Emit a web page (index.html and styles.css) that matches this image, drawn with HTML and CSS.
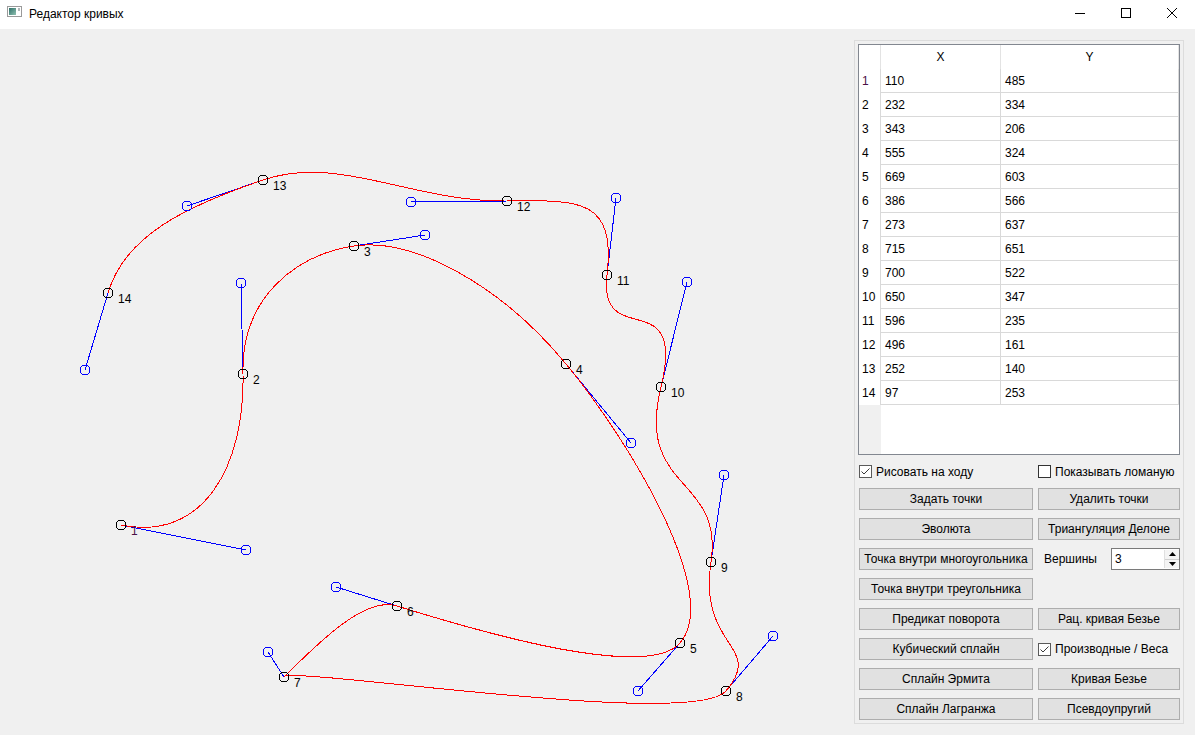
FILE: index.html
```html
<!DOCTYPE html>
<html lang="ru">
<head>
<meta charset="utf-8">
<title>Редактор кривых</title>
<link rel="stylesheet" href="styles.css">
</head>
<body>
<div class="window">
  <header class="titlebar">
    <svg class="app-icon" width="16" height="12" viewBox="0 0 16 12">
      <defs>
        <linearGradient id="ig" x1="0" y1="0" x2="1" y2="1">
          <stop offset="0" stop-color="#2d6f68"/>
          <stop offset="1" stop-color="#8fc0b0"/>
        </linearGradient>
      </defs>
      <rect x="0.5" y="0.5" width="14" height="10" fill="#fff" stroke="#9a9a9a"/>
      <rect x="2" y="2" width="7" height="7" fill="url(#ig)"/>
      <rect x="11" y="2" width="2" height="3" fill="#b0b8b8"/>
    </svg>
    <span class="title">Редактор кривых</span>
    <div class="controls">
      <span class="ctl"><svg width="10" height="10" viewBox="0 0 10 10"><line x1="0" y1="5.5" x2="10" y2="5.5" stroke="#000" stroke-width="1"/></svg></span>
      <span class="ctl"><svg width="10" height="10" viewBox="0 0 10 10"><rect x="0.5" y="0.5" width="9" height="9" fill="none" stroke="#000" stroke-width="1"/></svg></span>
      <span class="ctl"><svg width="10" height="10" viewBox="0 0 10 10"><path d="M0 0 L10 10 M10 0 L0 10" stroke="#000" stroke-width="1"/></svg></span>
    </div>
  </header>

  <main class="client">
    <div class="canvas">
      <svg class="plot" width="854" height="706" viewBox="0 29 854 706">
        <g class="handles-lines" stroke="#0000ff" stroke-width="1">
          <line x1="121" y1="525" x2="246" y2="550"/>
          <line x1="243" y1="374" x2="241" y2="283"/>
          <line x1="354" y1="246" x2="425" y2="235"/>
          <line x1="566" y1="364" x2="631" y2="443"/>
          <line x1="680" y1="643" x2="638" y2="691"/>
          <line x1="397" y1="606" x2="336" y2="587"/>
          <line x1="284" y1="677" x2="268" y2="652"/>
          <line x1="726" y1="691" x2="773" y2="636"/>
          <line x1="711" y1="562" x2="724" y2="475"/>
          <line x1="661" y1="387" x2="687" y2="282"/>
          <line x1="607" y1="275" x2="616" y2="198"/>
          <line x1="507" y1="201" x2="411" y2="202"/>
          <line x1="263" y1="180" x2="187" y2="206"/>
          <line x1="108" y1="293" x2="85" y2="370"/>
        </g>
        <path class="curve" fill="none" stroke="#ff0000" stroke-width="1"
          d="M121,525
             C204,542 245,465 243,374
             C241,298 295,255 354,246
             C413,237 501,285 566,364
             C631,443 722,595 680,643
             C645,683 458,625 397,606
             C366.5,596.5 324,637 285,676
             C320,670 695,728 726,691
             C765,645 698,649 711,562
             C724,475 635,492 661,387
             C687,282 598,352 607,275
             C616,198 579,200 507,201
             C411,202 339,154 263,180
             C187,206 125,235 108,293"/>
        <g class="handles" fill="none" stroke="#0000ff" stroke-width="1">
          <circle cx="246" cy="550" r="5"/>
          <circle cx="241" cy="283" r="5"/>
          <circle cx="425" cy="235" r="5"/>
          <circle cx="631" cy="443" r="5"/>
          <circle cx="638" cy="691" r="5"/>
          <circle cx="336" cy="587" r="5"/>
          <circle cx="268" cy="652" r="5"/>
          <circle cx="773" cy="636" r="5"/>
          <circle cx="724" cy="475" r="5"/>
          <circle cx="687" cy="282" r="5"/>
          <circle cx="616" cy="198" r="5"/>
          <circle cx="411" cy="202" r="5"/>
          <circle cx="187" cy="206" r="5"/>
          <circle cx="85" cy="370" r="5"/>
        </g>
        <g class="points" fill="none" stroke="#000" stroke-width="1">
          <circle cx="121" cy="525" r="5"/>
          <circle cx="243" cy="374" r="5"/>
          <circle cx="354" cy="246" r="5"/>
          <circle cx="566" cy="364" r="5"/>
          <circle cx="680" cy="643" r="5"/>
          <circle cx="397" cy="606" r="5"/>
          <circle cx="284" cy="677" r="5"/>
          <circle cx="726" cy="691" r="5"/>
          <circle cx="711" cy="562" r="5"/>
          <circle cx="661" cy="387" r="5"/>
          <circle cx="607" cy="275" r="5"/>
          <circle cx="507" cy="201" r="5"/>
          <circle cx="263" cy="180" r="5"/>
          <circle cx="108" cy="293" r="5"/>
        </g>
        <g class="labels">
          <text x="131" y="535" class="lbl-first">1</text>
          <text x="253" y="384">2</text>
          <text x="364" y="256">3</text>
          <text x="576" y="374">4</text>
          <text x="690" y="653">5</text>
          <text x="407" y="616">6</text>
          <text x="294" y="687">7</text>
          <text x="736" y="701">8</text>
          <text x="721" y="572">9</text>
          <text x="671" y="397">10</text>
          <text x="617" y="285">11</text>
          <text x="517" y="211">12</text>
          <text x="273" y="190">13</text>
          <text x="118" y="303">14</text>
        </g>
      </svg>
    </div>

    <aside class="panel">
      <div class="group">
        <div class="table">
          <div class="thead">
            <div class="hcorner"></div>
            <div class="th">X</div>
            <div class="th">Y</div>
          </div>
          <div class="tr"><div class="rn rn-current">1</div><div class="td">110</div><div class="td">485</div></div>
          <div class="tr"><div class="rn">2</div><div class="td">232</div><div class="td">334</div></div>
          <div class="tr"><div class="rn">3</div><div class="td">343</div><div class="td">206</div></div>
          <div class="tr"><div class="rn">4</div><div class="td">555</div><div class="td">324</div></div>
          <div class="tr"><div class="rn">5</div><div class="td">669</div><div class="td">603</div></div>
          <div class="tr"><div class="rn">6</div><div class="td">386</div><div class="td">566</div></div>
          <div class="tr"><div class="rn">7</div><div class="td">273</div><div class="td">637</div></div>
          <div class="tr"><div class="rn">8</div><div class="td">715</div><div class="td">651</div></div>
          <div class="tr"><div class="rn">9</div><div class="td">700</div><div class="td">522</div></div>
          <div class="tr"><div class="rn">10</div><div class="td">650</div><div class="td">347</div></div>
          <div class="tr"><div class="rn">11</div><div class="td">596</div><div class="td">235</div></div>
          <div class="tr"><div class="rn">12</div><div class="td">496</div><div class="td">161</div></div>
          <div class="tr"><div class="rn">13</div><div class="td">252</div><div class="td">140</div></div>
          <div class="tr"><div class="rn">14</div><div class="td">97</div><div class="td">253</div></div>
          <div class="tfill"><div class="tfill-rn"></div></div>
        </div>

        <div class="checks">
          <label class="check">
            <span class="box checked"><svg width="11" height="11" viewBox="0 0 11 11"><path d="M1.5 5.5 L4 8 L9.5 2.5" fill="none" stroke="#3a3a3a" stroke-width="1"/></svg></span>
            <span>Рисовать на ходу</span>
          </label>
          <label class="check">
            <span class="box"></span>
            <span>Показывать ломаную</span>
          </label>
        </div>

        <div class="buttons">
          <button class="btn">Задать точки</button>
          <button class="btn">Удалить точки</button>

          <button class="btn">Эволюта</button>
          <button class="btn">Триангуляция Делоне</button>

          <button class="btn">Точка внутри многоугольника</button>
          <div class="spin-cell">
            <span class="spin-label">Вершины</span>
            <div class="spinbox">
              <span class="spin-value">3</span>
              <div class="spin-btns">
                <span class="spin-up"><svg width="7" height="4" viewBox="0 0 7 4"><path d="M0 4 L3.5 0 L7 4 Z" fill="#000"/></svg></span>
                <span class="spin-down"><svg width="7" height="4" viewBox="0 0 7 4"><path d="M0 0 L3.5 4 L7 0 Z" fill="#000"/></svg></span>
              </div>
            </div>
          </div>

          <button class="btn">Точка внутри треугольника</button>
          <div class="empty"></div>

          <button class="btn">Предикат поворота</button>
          <button class="btn">Рац. кривая Безье</button>

          <button class="btn">Кубический сплайн</button>
          <label class="check">
            <span class="box checked"><svg width="11" height="11" viewBox="0 0 11 11"><path d="M1.5 5.5 L4 8 L9.5 2.5" fill="none" stroke="#3a3a3a" stroke-width="1"/></svg></span>
            <span>Производные / Веса</span>
          </label>

          <button class="btn">Сплайн Эрмита</button>
          <button class="btn">Кривая Безье</button>

          <button class="btn">Сплайн Лагранжа</button>
          <button class="btn">Псевдоупругий</button>
        </div>
      </div>
    </aside>
  </main>
</div>
</body>
</html>
```

FILE: styles.css
```css
* {
  box-sizing: border-box;
}

html,
body {
  margin: 0;
  padding: 0;
}

body {
  width: 1195px;
  height: 735px;
  overflow: hidden;
  background: #f0f0f0;
  font-family: "Liberation Sans", "Noto Sans", Arial, sans-serif;
  font-size: 12px;
  color: #000;
}

.window {
  display: flex;
  flex-direction: column;
  height: 735px;
}

/* ---------- title bar ---------- */
.titlebar {
  flex: none;
  height: 29px;
  background: #fff;
  display: flex;
  align-items: flex-start;
}

.app-icon {
  display: block;
  margin: 6px 0 0 7px;
}

.title {
  margin: 7px 0 0 6px;
  font-size: 12px;
  line-height: 15px;
}

.controls {
  margin-left: auto;
  display: flex;
}

.ctl {
  width: 46px;
  height: 29px;
  display: flex;
  justify-content: center;
  padding-top: 8px;
}

.ctl svg {
  display: block;
  shape-rendering: crispEdges;
}

/* ---------- client ---------- */
.client {
  flex: 1;
  display: flex;
  min-height: 0;
}

.canvas {
  flex: none;
  width: 854px;
  height: 706px;
}

.plot {
  display: block;
  shape-rendering: crispEdges;
}

.labels text {
  font-family: "Liberation Sans", "Noto Sans", Arial, sans-serif;
  font-size: 12px;
  fill: #000;
}

.labels .lbl-first {
  fill: #4a1046;
}

/* ---------- right panel ---------- */
.panel {
  flex: 1;
  display: flex;
  padding: 11px 11px 11px 0;
}

.group {
  flex: 1;
  border: 1px solid #dcdcdc;
  padding: 3px;
  display: flex;
  flex-direction: column;
}

/* table */
.table {
  height: 411px;
  flex: none;
  border: 1px solid #828790;
  background: #fff;
  display: flex;
  flex-direction: column;
}

.thead,
.tr {
  display: grid;
  grid-template-columns: 22px 120px 178px;
  height: 24px;
  flex: none;
}

.hcorner {
  border-right: 1px solid #e3e3e3;
}

.th {
  border-right: 1px solid #e3e3e3;
  text-align: center;
  padding-top: 1px;
  line-height: 23px;
}

.rn {
  border-right: 1px solid #d9d9d9;
  padding-left: 3px;
  padding-top: 1px;
  line-height: 23px;
}

.rn-current {
  color: #4a1046;
}

.td {
  border-right: 1px solid #d9d9d9;
  border-bottom: 1px solid #d9d9d9;
  padding-left: 4px;
  padding-top: 1px;
  line-height: 22px;
}

.tfill {
  flex: 1;
  display: flex;
}

.tfill-rn {
  width: 22px;
  background: #f0f0f0;
}

/* checkboxes */
.checks {
  display: grid;
  grid-template-columns: 174px 142px;
  column-gap: 5px;
  margin: 10px 0 0 1px;
  height: 13px;
}

.check {
  display: flex;
  align-items: center;
  gap: 4px;
  white-space: nowrap;
  height: 13px;
  align-self: center;
}

.box {
  width: 13px;
  height: 13px;
  flex: none;
  border: 1px solid #333;
  background: #fff;
  display: flex;
  align-items: center;
  justify-content: center;
}

.box.checked {
  border-color: #5a5a5a;
}

.box svg {
  display: block;
}

/* buttons */
.buttons {
  display: grid;
  grid-template-columns: 174px 142px;
  grid-auto-rows: 22px;
  column-gap: 5px;
  row-gap: 8px;
  margin: 10px 0 0 1px;
}

.btn {
  margin: 0;
  padding: 0;
  height: 22px;
  border: 1px solid #adadad;
  background: #e1e1e1;
  font-family: inherit;
  font-size: 12px;
  color: #000;
  white-space: nowrap;
  text-align: center;
}

/* spin box */
.spin-cell {
  display: flex;
  align-items: center;
}

.spin-label {
  padding-left: 6px;
}

.spinbox {
  margin-left: auto;
  width: 69px;
  height: 22px;
  border: 1px solid #7a7a7a;
  background: #fff;
  display: flex;
}

.spin-value {
  flex: 1;
  padding-left: 3px;
  line-height: 20px;
}

.spin-btns {
  width: 15px;
  margin: 1px 0 1px 0;
  display: flex;
  flex-direction: column;
  border-left: 1px solid #e0e0e0;
}

.spin-up,
.spin-down {
  flex: 1;
  display: flex;
  align-items: center;
  justify-content: center;
  background: #f4f4f4;
}

.spin-up {
  border-bottom: 1px solid #d0d0d0;
}

.spin-btns svg {
  display: block;
}
```
